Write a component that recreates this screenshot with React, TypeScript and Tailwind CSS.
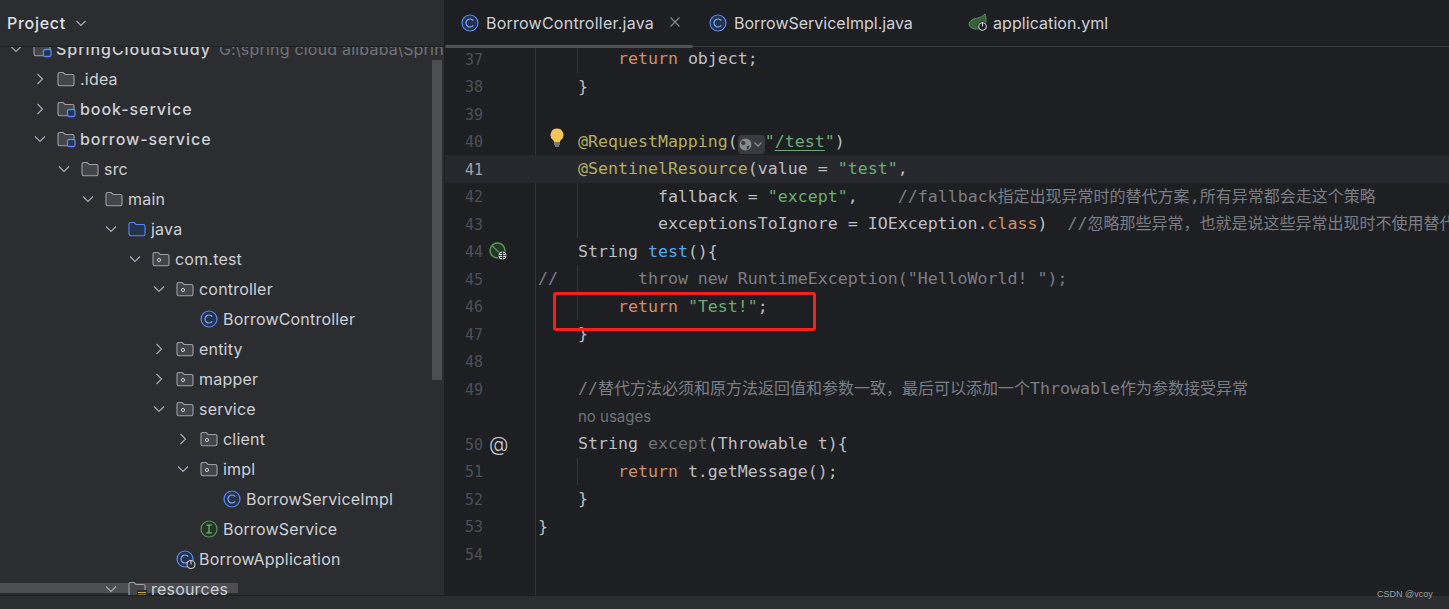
import type { ReactNode } from "react";

const FOLDER = "M1 13V3.2A1.7 1.7 0 0 1 2.7 1.5h3.4l2 2h7.2A1.7 1.7 0 0 1 17 5.2V13a1.7 1.7 0 0 1-1.7 1.7H2.7A1.7 1.7 0 0 1 1 13z";

const Folder = ({ kind = "plain" }: { kind?: "plain" | "package" | "module" | "source" | "resources" }) => {
  const source = kind === "source";
  return (
    <svg width="18" height="16" viewBox="0 0 18 16" fill="none" className="overflow-visible shrink-0">
      <path d={FOLDER} fill={source ? "#25324d" : "#43454a"} stroke={source ? "#548af7" : "#9da0a8"} strokeWidth="1.1" />
      {kind === "package" && <circle cx="7" cy="9" r="1.6" stroke="#ced0d6" strokeWidth="1" />}
      {kind === "module" && <rect x="10.5" y="8.5" width="7.5" height="7" rx="1.5" fill="#25324d" stroke="#548af7" strokeWidth="1.3" />}
      {kind === "resources" && (
        <>
          <rect x="9" y="9" width="10" height="8" fill="#2b2d30" />
          <path d="M10 11.5h8M10 14h8" stroke="#d5a63f" strokeWidth="1.2" />
        </>
      )}
    </svg>
  );
};

const ClassIcon = ({ run = false }: { run?: boolean }) => (
  <svg width="18" height="18" viewBox="0 0 18 18" fill="none" className="overflow-visible shrink-0">
    <circle cx="9" cy="9" r="8" fill="#25324d" stroke="#548af7" strokeWidth="1.2" />
    <path d="M12.2 6.6a4 4 0 1 0 0 4.8" stroke="#7fa8f9" strokeWidth="1.2" />
    {run && (
      <>
        <circle cx="15" cy="14.5" r="4" fill="#2b2d30" stroke="#ced0d6" strokeWidth="1.1" />
        <path d="M15 11v3.5" stroke="#ced0d6" strokeWidth="1.1" />
      </>
    )}
  </svg>
);

const InterfaceIcon = () => (
  <svg width="18" height="18" viewBox="0 0 18 18" fill="none" className="shrink-0">
    <circle cx="9" cy="9" r="8" fill="#253627" stroke="#57965c" strokeWidth="1.2" />
    <path d="M6.3 5.2h5.4M9 5.2v7.6M6.3 12.8h5.4" stroke="#6fb375" strokeWidth="1.2" />
  </svg>
);

const Chevron = ({ open }: { open: boolean }) => (
  <svg width="16" height="16" viewBox="0 0 16 16" fill="none">
    <path d={open ? "M3 5.5l5 5 5-5" : "M5.5 3l5 5-5 5"} stroke="#a8abb2" strokeWidth="1.2" />
  </svg>
);

type Node = {
  name: string;
  level: number;
  icon: ReactNode;
  open?: boolean;
  medium?: boolean;
  hint?: string;
};

const tree: Node[] = [
  { name: "SpringCloudStudy", level: 0, icon: <Folder kind="module" />, open: true, medium: true, hint: "G:\\spring cloud alibaba\\SpringCloudStudy" },
  { name: ".idea", level: 1, icon: <Folder />, open: false },
  { name: "book-service", level: 1, icon: <Folder kind="module" />, open: false, medium: true },
  { name: "borrow-service", level: 1, icon: <Folder kind="module" />, open: true, medium: true },
  { name: "src", level: 2, icon: <Folder />, open: true },
  { name: "main", level: 3, icon: <Folder />, open: true },
  { name: "java", level: 4, icon: <Folder kind="source" />, open: true },
  { name: "com.test", level: 5, icon: <Folder kind="package" />, open: true },
  { name: "controller", level: 6, icon: <Folder kind="package" />, open: true },
  { name: "BorrowController", level: 7, icon: <ClassIcon /> },
  { name: "entity", level: 6, icon: <Folder kind="package" />, open: false },
  { name: "mapper", level: 6, icon: <Folder kind="package" />, open: false },
  { name: "service", level: 6, icon: <Folder kind="package" />, open: true },
  { name: "client", level: 7, icon: <Folder kind="package" />, open: false },
  { name: "impl", level: 7, icon: <Folder kind="package" />, open: true },
  { name: "BorrowServiceImpl", level: 8, icon: <ClassIcon /> },
  { name: "BorrowService", level: 7, icon: <InterfaceIcon /> },
  { name: "BorrowApplication", level: 6, icon: <ClassIcon run /> },
  { name: "resources", level: 4, icon: <Folder kind="resources" />, open: true },
];

const Sidebar = () => (
  <aside className="relative w-[445px] shrink-0 flex flex-col bg-[#2b2d30] border-r border-[#1e1f22] overflow-hidden">
    {/* scrollbars, the tree text paints over them */}
    <div className="absolute right-[2px] top-[60px] w-[10px] h-[320px] bg-[#4d4e51]" />
    <div className="absolute left-0 bottom-[2px] w-[238px] h-[10px] bg-[#4d4e51]" />
    <div className="relative h-[47px] shrink-0 flex items-center gap-[8px] pl-[7px] border-b border-[#1e1f22] z-10 bg-[#2b2d30]">
      <span className="text-[16px] font-medium text-[#dfe1e5] tracking-[0.7px]">Project</span>
      <svg width="14" height="14" viewBox="0 0 14 14" fill="none">
        <path d="M2.5 5l4.5 4.5L11.5 5" stroke="#a8abb2" strokeWidth="1.2" />
      </svg>
    </div>
    <div className="relative flex-1 overflow-hidden">
      <div className="-mt-[13px]">
        {tree.map((n) => (
          <div
            key={n.name}
            className="h-[30px] flex items-center whitespace-pre"
            style={{ paddingLeft: Math.round(80 + 23.75 * (n.level - 1)) - 48 }}
          >
            <span className="w-4 h-4 shrink-0">{n.open !== undefined && <Chevron open={n.open} />}</span>
            <span className="w-[18px] ml-[9px] mr-[5px] shrink-0 flex items-center">{n.icon}</span>
            <span className={`text-[16px] text-[#ced0d6] ${n.medium ? "font-medium tracking-[0.95px]" : "font-normal tracking-[0.2px]"}`}>{n.name}</span>
            {n.hint && <span className="ml-[8px] text-[16px] text-[#6f737a] tracking-[0.2px]">{n.hint}</span>}
          </div>
        ))}
      </div>
    </div>
  </aside>
);

const K = ({ children }: { children: ReactNode }) => <span className="text-[#cf8e6d]">{children}</span>;
const S = ({ children }: { children: ReactNode }) => <span className="text-[#6aab73]">{children}</span>;
const A = ({ children }: { children: ReactNode }) => <span className="text-[#b3ae60]">{children}</span>;
const C = ({ children }: { children: ReactNode }) => <span className="text-[#7a7e85]">{children}</span>;
const Han = ({ children }: { children: ReactNode }) => <span className="text-[16px]">{children}</span>;

const Row = ({
  num,
  guide,
  current,
  gutter,
  children,
}: {
  num?: number;
  guide?: boolean;
  current?: boolean;
  gutter?: ReactNode;
  children?: ReactNode;
}) => (
  <div className={`h-[27.5px] flex whitespace-pre ${current ? "bg-[#26282e]" : ""}`}>
    <div className={`w-[91px] h-full shrink-0 flex items-center border-r ${current ? "border-transparent" : "border-[#313438]"}`}>
      <span className={`w-[38px] pt-[2px] text-right text-[15px] ${current ? "text-[#a1a3ab]" : "text-[#4b5059]"}`}>{num}</span>
      <span className="ml-[6px] flex items-center">{gutter}</span>
    </div>
    <div className="relative h-full flex-1 pl-[2px] leading-[28.5px] text-[#bcbec4]">
      {guide && <span className="absolute left-[41px] top-0 bottom-0 w-px bg-[#313438]" />}
      {children}
    </div>
  </div>
);

const Bulb = () => (
  <svg width="14" height="20" viewBox="0 0 14 20" className="absolute left-[14px] top-0">
    <path d="M7 .5a6.5 6.5 0 0 0-4 11.6c.8.7 1 1.4 1 2.4h6c0-1 .2-1.7 1-2.4A6.5 6.5 0 0 0 7 .5z" fill="#f2c55c" />
    <path d="M4 16h6M5 18h4" stroke="#ced0d6" strokeWidth="1.2" />
  </svg>
);

const GlobeHint = () => (
  <span className="inline-flex items-center justify-center align-[-4px] w-[27px] h-[19px] rounded-[4px] bg-[#393b40]">
    <svg width="13" height="13" viewBox="0 0 13 13">
      <circle cx="6.5" cy="6.5" r="6" fill="#868a91" />
      <path d="M3 2.5l3 1 .5 2.5-2.5 1.5-2-2zM8 8l2.5-.5-1 3.5-2 .5z" fill="#393b40" />
    </svg>
    <svg width="12" height="12" viewBox="0 0 12 12" fill="none">
      <path d="M2.5 4.5L6 8l3.500-3.500" stroke="#868a91" strokeWidth="1.3" />
    </svg>
  </span>
);

const LeafGlobe = () => (
  <svg width="20" height="20" viewBox="0 0 20 20" fill="none" className="overflow-visible">
    <circle cx="8.5" cy="8.5" r="7.5" fill="#253627" stroke="#57965c" strokeWidth="1.6" />
    <path d="M3 3.5l9 9" stroke="#57965c" strokeWidth="1.2" />
    <circle cx="13.5" cy="13.5" r="5" fill="#1e1f22" />
    <circle cx="13.5" cy="13.5" r="4" fill="#ced0d6" />
    <path d="M9.5 13.5h8M13.5 9.5v8M11 11.5h5M11 15.5h5" stroke="#1e1f22" strokeWidth="0.8" />
  </svg>
);

const Tab = ({ icon, name, className, textClass, children }: { icon: ReactNode; name: string; className: string; textClass?: string; children?: ReactNode }) => (
  <div className={`flex items-center h-full ${className}`}>
    <span className="w-[18px] flex items-center">{icon}</span>
    <span className={`ml-[7px] text-[16px] text-[#ced0d6] ${textClass ?? ""}`}>{name}</span>
    {children}
  </div>
);

const Editor = () => (
  <main className="relative flex-1 min-w-0 flex flex-col bg-[#1e1f22] overflow-hidden">
    <div className="relative h-[47px] shrink-0 flex items-center border-b border-[#393b40] z-10 bg-[#1e1f22]">
      <Tab icon={<ClassIcon />} name="BorrowController.java" className="w-[264px] pl-[16px]" textClass="tracking-[0.24px]">
        <svg width="10" height="10" viewBox="0 0 10 10" className="ml-[16px] mb-[2px]">
          <path d="M.5 .5l9 9M9.5 .5l-9 9" stroke="#868a91" strokeWidth="1.1" />
        </svg>
      </Tab>
      <Tab icon={<ClassIcon />} name="BorrowServiceImpl.java" className="w-[259px]" />
      <Tab
        icon={
          <svg width="21" height="18" viewBox="0 0 21 18" fill="none" className="overflow-visible">
            <path d="M1 11C1 6 6 5 10 4c3-.7 5-2 7-4 1.5 4 1.5 9-1 12-3 3.5-12 5-15-1z" fill="#35603a" stroke="#57965c" strokeWidth="1" />
            <circle cx="14.5" cy="12.5" r="5" fill="#1e1f22" />
            <circle cx="14.5" cy="12.5" r="3.8" stroke="#ced0d6" strokeWidth="1.1" />
            <path d="M14.5 8v4.5" stroke="#ced0d6" strokeWidth="1.1" />
          </svg>
        }
        name="application.yml"
        className="flex-1"
        textClass="tracking-[0.07px]"
      />
      <span className="absolute left-0 bottom-[-2px] w-[248px] h-[3px] rounded-full bg-[#4e5157]" />
    </div>
    <div className="flex-1 flex flex-col overflow-hidden font-['DejaVu_Sans_Mono','Noto_Sans_CJK_SC',monospace] text-[16.6px]">
      <div className="-mt-[1.75px]">
        <Row num={37} guide>{"        "}<K>return</K> object;</Row>
        <Row num={38}>{"    }"}</Row>
        <Row num={39} />
        <Row num={40}>
          <Bulb />
          {"    "}<A>@RequestMapping</A>(<GlobeHint /><S>"<span className="underline underline-offset-[3px]">/test</span>"</S>)
        </Row>
        <Row num={41} current>{"    "}<A>@SentinelResource</A>(value = <S>"test"</S>,</Row>
        <Row num={42} guide>
          {"            "}fallback = <S>"except"</S>,{"    "}<C>//fallback<Han>指定出现异常时的替代方案</Han>,<Han>所有异常都会走这个策略</Han></C>
        </Row>
        <Row num={43} guide>
          {"            "}exceptionsToIgnore = IOException.<K>class</K>){"  "}<C>//<Han>忽略那些异常，也就是说这些异常出现时不使用替代方案</Han></C>
        </Row>
        <Row num={44} gutter={<LeafGlobe />}>{"    "}String <span className="text-[#56a8f5]">test</span>(){"{"}</Row>
        <Row num={45} guide><C>//{"        "}throw new RuntimeException("HelloWorld! ");</C></Row>
        <Row num={46} guide>{"        "}<K>return</K> <S>"Test!"</S>;</Row>
        <Row num={47}>{"    }"}</Row>
        <Row num={48} />
        <Row num={49}>
          {"    "}<C>//<Han>替代方法必须和原方法返回值和参数一致，最后可以添加一个</Han>Throwable<Han>作为参数接受异常</Han></C>
        </Row>
        <Row>
          {"    "}<span className="font-['Inter',sans-serif] text-[15px] text-[#6f737a]">no usages</span>
        </Row>
        <Row num={50} gutter={<span className="font-['Inter',sans-serif] font-light text-[20px] leading-none text-[#ced0d6]">@</span>}>
          {"    "}String <span className="text-[#6f737a]">except</span>(Throwable t){"{"}
        </Row>
        <Row num={51} guide>{"        "}<K>return</K> t.getMessage();</Row>
        <Row num={52}>{"    }"}</Row>
        <Row num={53}>{"}"}</Row>
        <Row num={54} />
      </div>
      <div className="flex-1 w-[91px] border-r border-[#313438]" />
    </div>
    {/* red annotation box drawn on the screenshot */}
    <div className="absolute left-[108px] top-[292px] w-[263px] h-[39px] border-[3px] border-[#ff1f1a] rounded-[3px] z-20" />
  </main>
);

export default function App() {
  return (
    <div className="relative w-[1449px] h-[609px] flex flex-col overflow-hidden font-['Inter',sans-serif] bg-[#1e1f22]">
      <div className="flex flex-1 min-h-0">
        <Sidebar />
        <Editor />
      </div>
      <div className="h-[14px] shrink-0 bg-[#2b2d30] border-t border-[#1e1f22]" />
      <span className="absolute left-[1377px] top-[588px] text-[9px] leading-[12px] font-['Liberation_Sans',sans-serif] text-[#a3a3a3]">CSDN @vcoy</span>
    </div>
  );
}
